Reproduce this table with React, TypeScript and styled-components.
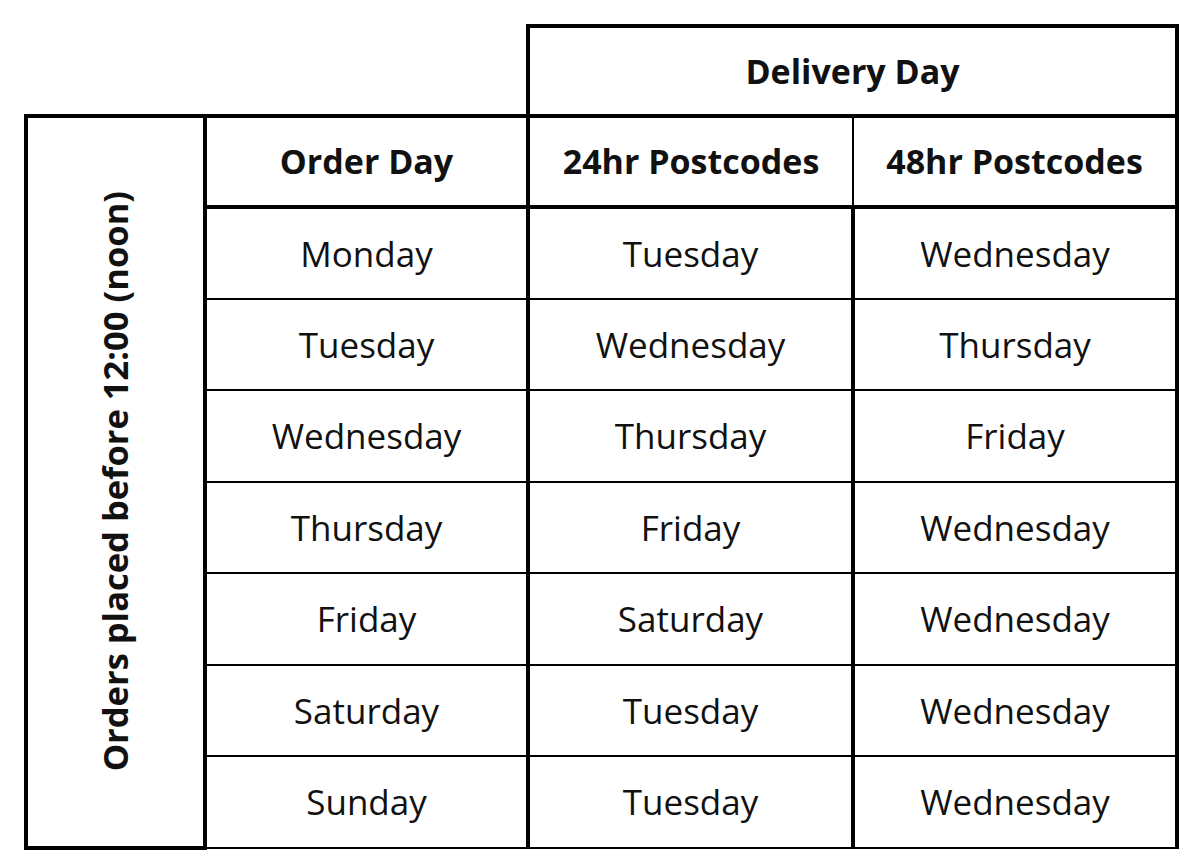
import React from 'react';
import styled, { createGlobalStyle } from 'styled-components';

const GlobalStyle = createGlobalStyle`
  html, body {
    margin: 0;
    padding: 0;
    background: #ffffff;
  }
  body {
    font-family: "Open Sans", "Liberation Sans", sans-serif;
    color: #111;
  }
`;

const Page = styled.div`
  padding: 24px 0 0 24px;
`;

const Table = styled.table`
  border-collapse: collapse;
  table-layout: fixed;
  width: 1151px;
`;

const Row = styled.tr<{ $h?: number }>`
  height: ${p => p.$h ?? 91.5}px;
`;

const Blank = styled.td`
  border: none;
`;

const Cell = styled.td<{ $bold?: boolean; $thin?: boolean }>`
  border: 4px solid #000;
  border-top-width: ${p => (p.$thin ? '2px' : '4px')};
  border-bottom-width: ${p => (p.$thin ? '2px' : '4px')};
  text-align: center;
  vertical-align: middle;
  padding: 0;
  font-size: ${p => (p.$bold ? 34 : 35)}px;
  font-weight: ${p => (p.$bold ? 700 : 400)};
  line-height: 1;
  white-space: nowrap;
`;

const SideCell = styled.td`
  border: 4px solid #000;
  padding: 0;
  vertical-align: middle;
  text-align: center;
`;

const SideLabel = styled.div`
  writing-mode: vertical-rl;
  transform: rotate(180deg);
  margin: 0 auto;
  font-size: 34.5px;
  font-weight: 700;
  line-height: 1;
  white-space: nowrap;
`;

const rows: [string, string, string][] = [
  ['Monday', 'Tuesday', 'Wednesday'],
  ['Tuesday', 'Wednesday', 'Thursday'],
  ['Wednesday', 'Thursday', 'Friday'],
  ['Thursday', 'Friday', 'Wednesday'],
  ['Friday', 'Saturday', 'Wednesday'],
  ['Saturday', 'Tuesday', 'Wednesday'],
  ['Sunday', 'Tuesday', 'Wednesday'],
];

const App: React.FC = () => (
  <>
    <GlobalStyle />
    <Page>
      <Table>
        <colgroup>
          <col style={{ width: 179 }} />
          <col style={{ width: 323 }} />
          <col style={{ width: 325 }} />
          <col style={{ width: 324 }} />
        </colgroup>
        <tbody>
          <Row $h={89.5}>
            <Blank colSpan={2} />
            <Cell colSpan={2} $bold>Delivery Day</Cell>
          </Row>
          <Row>
            <SideCell rowSpan={8}>
              <SideLabel>Orders placed before 12:00 (noon)</SideLabel>
            </SideCell>
            <Cell $bold>Order Day</Cell>
            <Cell $bold style={{ borderRightWidth: 2 }}>24hr Postcodes</Cell>
            <Cell $bold style={{ borderLeftWidth: 2 }}>48hr Postcodes</Cell>
          </Row>
          {rows.map(([order, d24, d48], i) => (
            <Row key={i}>
              <Cell $thin style={i === 0 ? { borderTopWidth: 4 } : undefined}>{order}</Cell>
              <Cell $thin>{d24}</Cell>
              <Cell $thin>{d48}</Cell>
            </Row>
          ))}
        </tbody>
      </Table>
    </Page>
  </>
);

export default App;
